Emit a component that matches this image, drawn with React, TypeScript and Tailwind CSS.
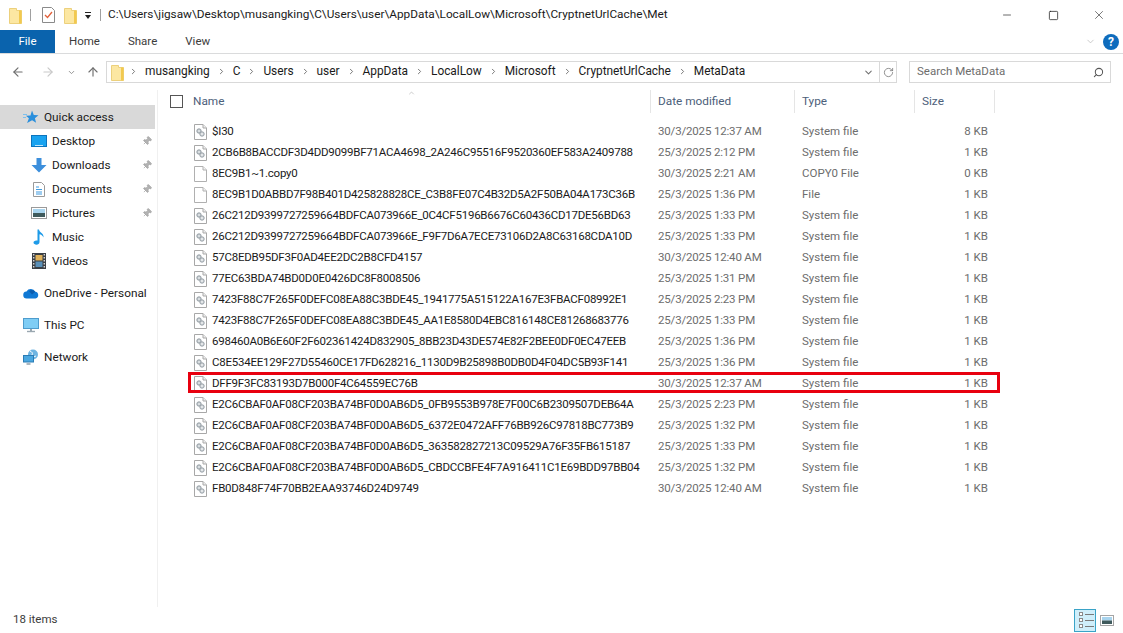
import { Minus, Square, X, ChevronDown, RotateCw, Search, ArrowLeft, ArrowRight, ArrowUp, ChevronRight, ChevronUp, Pin } from "lucide-react";

type FileRow = {
  name: string;
  date: string;
  type: string;
  size: string;
  plain?: boolean;
  marked?: boolean;
};

const files: FileRow[] = [
  { name: "$I30", date: "30/3/2025 12:37 AM", type: "System file", size: "8 KB" },
  { name: "2CB6B8BACCDF3D4DD9099BF71ACA4698_2A246C95516F9520360EF583A2409788", date: "25/3/2025 2:12 PM", type: "System file", size: "1 KB" },
  { name: "8EC9B1~1.copy0", date: "30/3/2025 2:21 AM", type: "COPY0 File", size: "0 KB", plain: true },
  { name: "8EC9B1D0ABBD7F98B401D425828828CE_C3B8FE07C4B32D5A2F50BA04A173C36B", date: "25/3/2025 1:36 PM", type: "File", size: "1 KB", plain: true },
  { name: "26C212D9399727259664BDFCA073966E_0C4CF5196B6676C60436CD17DE56BD63", date: "25/3/2025 1:33 PM", type: "System file", size: "1 KB" },
  { name: "26C212D9399727259664BDFCA073966E_F9F7D6A7ECE73106D2A8C63168CDA10D", date: "25/3/2025 1:33 PM", type: "System file", size: "1 KB" },
  { name: "57C8EDB95DF3F0AD4EE2DC2B8CFD4157", date: "30/3/2025 12:40 AM", type: "System file", size: "1 KB" },
  { name: "77EC63BDA74BD0D0E0426DC8F8008506", date: "25/3/2025 1:31 PM", type: "System file", size: "1 KB" },
  { name: "7423F88C7F265F0DEFC08EA88C3BDE45_1941775A515122A167E3FBACF08992E1", date: "25/3/2025 2:23 PM", type: "System file", size: "1 KB" },
  { name: "7423F88C7F265F0DEFC08EA88C3BDE45_AA1E8580D4EBC816148CE81268683776", date: "25/3/2025 1:33 PM", type: "System file", size: "1 KB" },
  { name: "698460A0B6E60F2F602361424D832905_8BB23D43DE574E82F2BEE0DF0EC47EEB", date: "25/3/2025 1:36 PM", type: "System file", size: "1 KB" },
  { name: "C8E534EE129F27D55460CE17FD628216_1130D9B25898B0DB0D4F04DC5B93F141", date: "25/3/2025 1:36 PM", type: "System file", size: "1 KB" },
  { name: "DFF9F3FC83193D7B000F4C64559EC76B", date: "30/3/2025 12:37 AM", type: "System file", size: "1 KB", marked: true },
  { name: "E2C6CBAF0AF08CF203BA74BF0D0AB6D5_0FB9553B978E7F00C6B2309507DEB64A", date: "25/3/2025 2:23 PM", type: "System file", size: "1 KB" },
  { name: "E2C6CBAF0AF08CF203BA74BF0D0AB6D5_6372E0472AFF76BB926C97818BC773B9", date: "25/3/2025 1:32 PM", type: "System file", size: "1 KB" },
  { name: "E2C6CBAF0AF08CF203BA74BF0D0AB6D5_363582827213C09529A76F35FB615187", date: "25/3/2025 1:33 PM", type: "System file", size: "1 KB" },
  { name: "E2C6CBAF0AF08CF203BA74BF0D0AB6D5_CBDCCBFE4F7A916411C1E69BDD97BB04", date: "25/3/2025 1:32 PM", type: "System file", size: "1 KB" },
  { name: "FB0D848F74F70BB2EAA93746D24D9749", date: "30/3/2025 12:40 AM", type: "System file", size: "1 KB" },
];

const crumbs = ["musangking", "C", "Users", "user", "AppData", "LocalLow", "Microsoft", "CryptnetUrlCache", "MetaData"];

function FolderIcon({ className }: { className?: string }) {
  return (
    <svg viewBox="0 0 13 17" className={className}>
      <path d="M0.5 1.5h7v2h5v13h-12z" fill="#fce7a2" stroke="#ecd07c" />
      <rect x="10" y="3.5" width="2.5" height="13" fill="#f2c94f" />
    </svg>
  );
}

function SystemFileIcon() {
  return (
    <svg viewBox="0 0 13 16" className="w-[13px] h-[16px] shrink-0">
      <path d="M0.5 0.5h8.500l3.500 3.500v11.500h-12z" fill="#fff" stroke="#a8a8a8" />
      <path d="M9 0.5v3.500h3.500" fill="#eee" stroke="#a8a8a8" />
      <circle cx="5" cy="7" r="2.200" fill="#c4cbd0" stroke="#8e979e" strokeWidth="0.9" />
      <circle cx="8" cy="10" r="2.200" fill="#d5dadd" stroke="#8e979e" strokeWidth="0.9" />
      <circle cx="5" cy="7" r="0.7" fill="#fff" />
      <circle cx="8" cy="10" r="0.7" fill="#fff" />
    </svg>
  );
}

function PlainFileIcon() {
  return (
    <svg viewBox="0 0 13 16" className="w-[13px] h-[16px] shrink-0">
      <path d="M0.5 0.5h8.500l3.500 3.500v11.500h-12z" fill="#fff" stroke="#b0b0b0" />
      <path d="M9 0.5v3.500h3.500" fill="#f2f2f2" stroke="#b0b0b0" />
    </svg>
  );
}

function NavPin() {
  return <Pin className="w-[10px] h-[10px] text-[#9a9a9a] fill-[#b4b4b4] rotate-45" strokeWidth={1.5} />;
}

function NavItem({ label, icon, pinned, active, indent }: { label: string; icon: React.ReactNode; pinned?: boolean; active?: boolean; indent?: boolean }) {
  return (
    <div className={`flex items-center h-6 w-[155px] ${active ? "bg-[#d9d9d9]" : ""} ${indent ? "pl-[31px]" : "pl-[23px]"}`}>
      <div className="w-4 h-4 flex items-center justify-center shrink-0">{icon}</div>
      <span className="ml-[5px] pt-px text-[11.8px] whitespace-nowrap text-[#1a1a1a]">{label}</span>
      {pinned && (
        <span className="ml-auto mr-[3px]">
          <NavPin />
        </span>
      )}
    </div>
  );
}

export default function App() {
  return (
    <div className="w-[1123px] h-[633px] bg-white flex flex-col overflow-hidden text-[11.5px] font-['Roboto',sans-serif] text-[#1a1a1a]">
      {/* Title bar */}
      <div className="h-[30px] flex items-center shrink-0">
        <FolderIcon className="w-[13px] h-[17px] ml-[9px]" />
        <div className="w-px h-[12px] bg-[#a0a0a0] ml-2" />
        <svg viewBox="0 0 13 16" className="w-[13px] h-[16px] ml-[11px]">
          <path d="M0.5 0.5h9l3 3v12h-12z" fill="#fff" stroke="#8a8a8a" />
          <path d="M3 8l2.500 2.500L10 5" fill="none" stroke="#e2603a" strokeWidth="1.300" />
        </svg>
        <FolderIcon className="w-[13px] h-[17px] ml-[9px]" />
        <div className="ml-[8px] flex flex-col items-center gap-[2px]">
          <div className="w-[6px] h-px bg-[#222]" />
          <div className="w-0 h-0 border-x-[3.5px] border-x-transparent border-t-[4px] border-t-[#222]" />
        </div>
        <div className="w-px h-[12px] bg-[#a0a0a0] ml-[9px]" />
        <span className="ml-[7px] w-[561px] text-[11.8px] whitespace-nowrap overflow-hidden">C:\Users\jigsaw\Desktop\musangking\C\Users\user\AppData\LocalLow\Microsoft\CryptnetUrlCache\Met</span>
        <div className="ml-auto flex items-center">
          <div className="w-[46px] flex justify-center"><Minus className="w-[12px] h-[12px]" strokeWidth={1.3} /></div>
          <div className="w-[46px] flex justify-center"><Square className="w-[11px] h-[11px]" strokeWidth={1.6} /></div>
          <div className="w-[46px] flex justify-center mr-px"><X className="w-[14px] h-[14px]" strokeWidth={1} /></div>
        </div>
      </div>

      {/* Ribbon tabs */}
      <div className="h-[24px] flex items-stretch border-b border-[#dadbdc] shrink-0">
        <div className="w-[55px] bg-[#0a63ad] text-white flex items-center justify-center">File</div>
        <div className="flex items-center text-[#3c3c3c] ml-[14px] gap-[28px]">
          <span>Home</span>
          <span>Share</span>
          <span>View</span>
        </div>
        <div className="ml-auto flex items-center mr-[4px] gap-[7px]">
          <ChevronDown className="w-[11px] h-[11px] text-[#b5b5b5]" strokeWidth={1.5} />
          <div className="w-4 h-4 rounded-full bg-[#0f6cbd] text-white font-bold text-[12px] flex items-center justify-center">?</div>
        </div>
      </div>

      {/* Navigation bar */}
      <div className="h-[36px] flex items-center shrink-0">
        <ArrowLeft className="w-[14px] h-[14px] ml-[11px] text-[#6f6f6f]" strokeWidth={2} />
        <ArrowRight className="w-[14px] h-[14px] ml-[16px] text-[#c9c9c9]" strokeWidth={2} />
        <ChevronDown className="w-[9px] h-[9px] ml-[12px] text-[#8f8f8f]" strokeWidth={2.5} />
        <ArrowUp className="w-[14px] h-[14px] ml-[10px] text-[#6f6f6f]" strokeWidth={2} />
        <div className="ml-[6px] w-[791px] h-[22px] border border-[#d9d9d9] flex items-center">
          <FolderIcon className="w-[13px] h-[17px] ml-[4px]" />
          <div className="ml-[5px] flex items-center gap-[7px] text-[11.9px] text-[#1a1a1a]">
            {crumbs.map((c) => (
              <div key={c} className="flex items-center gap-[7px]">
                <ChevronRight className="w-[9px] h-[9px] text-[#707070]" strokeWidth={2.5} />
                <span className="tracking-[-0.03px]">{c}</span>
              </div>
            ))}
          </div>
          <div className="ml-auto flex items-center h-full">
            <ChevronDown className="w-[11px] h-[11px] text-[#6f6f6f] mr-[5px]" strokeWidth={2.2} />
            <div className="w-[17px] h-full border-l border-[#d9d9d9] flex items-center justify-center">
              <RotateCw className="w-[11px] h-[11px] text-[#7c7c7c]" strokeWidth={1.8} />
            </div>
          </div>
        </div>
        <div className="ml-[12px] w-[202px] h-[22px] border border-[#d9d9d9] flex items-center pl-[7px] pr-[6px] text-[#6d6d6d]">
          <span>Search MetaData</span>
          <Search className="ml-auto w-[11px] h-[11px] text-[#555] -scale-x-100" strokeWidth={2.2} />
        </div>
      </div>

      {/* Body */}
      <div className="flex-1 flex min-h-0">
        <div className="w-[158px] shrink-0 pt-[15px] border-r border-[#f0f0f0]">
          <NavItem
            active
            label="Quick access"
            icon={
              <svg viewBox="0 0 16 16" className="w-4 h-4">
                <path d="M9 1.500l1.800 4.400 4.700.3-3.600 3 1.200 4.600-4-2.500-5 2.700 1.800-4.800-3-2.500 4.600-.3z" fill="#2a8fdc" />
                <path d="M0 5.500h4M0 8.500h3" stroke="#7cc0ee" />
              </svg>
            }
          />
          <NavItem
            indent
            pinned
            label="Desktop"
            icon={
              <svg viewBox="0 0 16 12" className="w-4 h-3">
                <rect x=".5" y=".5" width="15" height="11" fill="#19a3f0" stroke="#0c74bd" />
                <path d="M4 10.500h8" stroke="#bfe6fb" />
              </svg>
            }
          />
          <NavItem
            indent
            pinned
            label="Downloads"
            icon={
              <svg viewBox="0 0 16 16" className="w-4 h-4">
                <path d="M5.500 1h5v7H15.500L8 15.500.5 8h5z" fill="#3c8fdc" />
              </svg>
            }
          />
          <NavItem
            indent
            pinned
            label="Documents"
            icon={
              <svg viewBox="0 0 12 15" className="w-3 h-[15px]">
                <path d="M.5.5h8l3 3v11H.5z" fill="#fff" stroke="#9a9a9a" />
                <path d="M3 5h3M3 7.500h6M3 10h6M3 12h6" stroke="#3f9be0" />
              </svg>
            }
          />
          <NavItem
            indent
            pinned
            label="Pictures"
            icon={
              <svg viewBox="0 0 16 12" className="w-4 h-3">
                <rect x=".5" y=".5" width="15" height="11" fill="#fff" stroke="#9a9a9a" />
                <rect x="2" y="2" width="12" height="4" fill="#a8d4ee" />
                <rect x="2" y="6" width="12" height="4" fill="#3f5a5c" />
              </svg>
            }
          />
          <NavItem
            indent
            label="Music"
            icon={
              <svg viewBox="0 0 12 16" className="w-3 h-4">
                <path d="M4.500.5h1.500c.3 3 5 3.500 4.500 8-.8-2-2.500-3-4-3.200V13c0 1.700-1.500 2.700-3 2.700S.5 14.800.5 13.500s1.500-2.500 4-2z" fill="#1e9be8" />
              </svg>
            }
          />
          <NavItem
            indent
            label="Videos"
            icon={
              <svg viewBox="0 0 14 16" className="w-[14px] h-4">
                <rect width="14" height="16" fill="#3a3f45" />
                <rect x="3.500" y="2" width="7" height="5.500" fill="#e0b25a" />
                <rect x="3.500" y="8.500" width="7" height="5.500" fill="#5a90b8" />
                <path d="M1.700 1v14M12.300 1v14" stroke="#d5d5d5" strokeWidth="1.400" strokeDasharray="1.500 1.500" />
              </svg>
            }
          />
          <div className="mt-[8px]">
            <NavItem
              label="OneDrive - Personal"
              icon={
                <svg viewBox="0 0 16 11" className="w-4 h-[11px]">
                  <path d="M4 10.500a3.500 3.500 0 0 1-.5-7A5 5 0 0 1 12.300 3.800 3.400 3.400 0 0 1 12.500 10.500z" fill="#0f78d4" />
                  <path d="M6 3a5 5 0 0 1 6.300.8L9 6.500z" fill="#0a5cae" />
                </svg>
              }
            />
          </div>
          <div className="mt-[8px]">
            <NavItem
              label="This PC"
              icon={
                <svg viewBox="0 0 16 15" className="w-4 h-[15px]">
                  <rect x=".5" y=".5" width="15" height="10" fill="#7fcdf5" stroke="#4e9ccd" />
                  <path d="M7 11h2v2H7z" fill="#9aa7b0" />
                  <path d="M4 13.500h8" stroke="#9aa7b0" strokeWidth="1.400" />
                </svg>
              }
            />
          </div>
          <div className="mt-[8px]">
            <NavItem
              label="Network"
              icon={
                <svg viewBox="0 0 16 16" className="w-4 h-4">
                  <circle cx="10" cy="5.500" r="5" fill="#6fb5e2" />
                  <path d="M7 2c2 1 3 2 2 4s2 2 4 1" stroke="#fff" fill="none" />
                  <rect x=".5" y="6.500" width="10" height="6.500" fill="#4aa7e0" stroke="#2a7cb5" />
                  <path d="M3.500 15h4" stroke="#8a9aa5" strokeWidth="1.400" />
                </svg>
              }
            />
          </div>
        </div>

        <div className="flex-1 min-w-0">
          {/* Column headers */}
          <div className="relative h-[31px] grid grid-cols-[493px_144px_120px_80px] text-[11.8px] text-[#4c607a]">
            <ChevronUp className="absolute left-[248px] -top-[1px] w-[11px] h-[8px] text-[#9a9a9a]" strokeWidth={1.5} />
            <div className="flex items-center h-[23px] border-r border-[#e5e5e5] pl-[12px]">
              <div className="w-[13px] h-[13px] border border-[#555] mr-[10px]" />
              <span>Name</span>
            </div>
            <div className="flex items-center h-[23px] border-r border-[#e5e5e5] pl-[7px]">Date modified</div>
            <div className="flex items-center h-[23px] border-r border-[#e5e5e5] pl-[7px]">Type</div>
            <div className="flex items-center h-[23px] border-r border-[#e5e5e5] pl-[7px]">Size</div>
          </div>

          {/* File rows */}
          <div className="flex flex-col">
            {files.map((f) => (
              <div key={f.name} className="relative h-[21px] grid grid-cols-[493px_144px_120px_80px] items-center">
                <div className="flex items-center pl-[36px] gap-[5px] whitespace-nowrap text-[#1a1a1a]">
                  {f.plain ? <PlainFileIcon /> : <SystemFileIcon />}
                  <span className="tracking-[-0.23px]">{f.name}</span>
                </div>
                <div className="pl-[7px] tracking-[-0.17px] text-[#6d6d6d]">{f.date}</div>
                <div className="pl-[7px] text-[#6d6d6d]">{f.type}</div>
                <div className="pr-[7px] text-right text-[#6d6d6d]">{f.size}</div>
                {f.marked && <div className="absolute left-[30px] w-[812px] -top-px h-[21px] border-[3px] border-[#e8000f]" />}
              </div>
            ))}
          </div>
        </div>
      </div>

      {/* Status bar */}
      <div className="h-[26px] flex items-center shrink-0">
        <span className="ml-[13px] text-[#3c3c3c]">18 items</span>
        <div className="ml-auto flex items-center mr-[9px] gap-[4px]">
          <div className="w-[22px] h-[23px] border border-[#3aa3c7] bg-[#cfeefa] flex flex-col justify-center gap-[2px] pl-[4px]">
            {[0, 1, 2].map((i) => (
              <div key={i} className="flex items-center gap-[2px]">
                <div className="w-[4px] h-[4px] border border-[#8a8a8a] bg-white" />
                <div className="w-[9px] h-px bg-[#7a7a7a]" />
              </div>
            ))}
          </div>
          <svg viewBox="0 0 14 11" className="w-[14px] h-[11px]">
            <rect x=".5" y=".5" width="13" height="10" fill="#fff" stroke="#a5a5a5" />
            <rect x="2" y="2" width="10" height="3.500" fill="#a8d4ee" />
            <rect x="2" y="5.500" width="10" height="3.500" fill="#3f5a5c" />
          </svg>
        </div>
      </div>
    </div>
  );
}
